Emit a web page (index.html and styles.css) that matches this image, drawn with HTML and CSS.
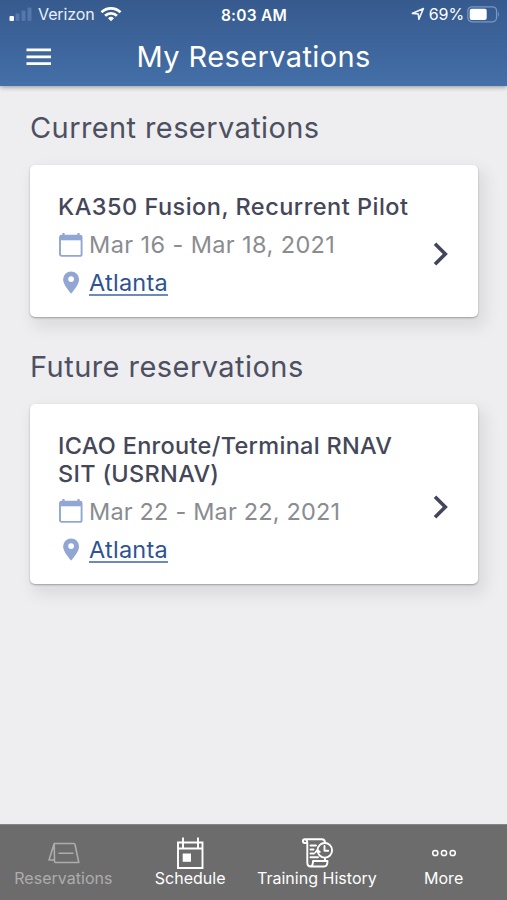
FILE: index.html
```html
<!DOCTYPE html>
<html lang="en">
<head>
<meta charset="utf-8">
<title>My Reservations</title>
<link rel="stylesheet" href="styles.css">
</head>
<body>
<div class="app">
  <header class="header">
    <div class="status">
      <div class="status-left">
        <svg width="24" height="16" viewBox="0 0 24 16"><rect x="0.5" y="10" width="4.5" height="5" rx="1" fill="#fff"/><g fill="#5577a9"><rect x="6.5" y="7.5" width="4" height="7.5" rx="1"/><rect x="12.5" y="4.5" width="4" height="10.5" rx="1"/><rect x="18.5" y="1.5" width="4" height="13.5" rx="1"/></g></svg>
        <span class="carrier">Verizon</span>
        <svg class="wifi" width="22" height="16" viewBox="0 0 22 16" fill="none" stroke="#fff" stroke-width="2.7"><path d="M1.500 6.200a13.500 13.500 0 0 1 19 0"/><path d="M5.100 9.800a8.400 8.400 0 0 1 11.800 0"/><path d="M8 12.300a4.300 4.300 0 0 1 6 0L11 15.300z" fill="#fff" stroke="none"/></svg>
      </div>
      <span class="clock">8:03 AM</span>
      <div class="status-right">
        <svg width="14" height="14" viewBox="0 0 14 14" fill="none" stroke="#f2f6fb" stroke-width="1.6" stroke-linejoin="round"><path d="M1.300 6.400 12.400 1.500 7.900 12.300 7.300 7z"/></svg>
        <span class="percent">69%</span>
        <svg class="battery" width="33" height="17" viewBox="0 0 33 17"><rect x="0.8" y="0.8" width="28.8" height="15" rx="4.2" fill="none" stroke="#7897c1" stroke-width="1.3"/><rect x="2.7" y="2.7" width="17" height="11.2" rx="2" fill="#fff"/><path d="M31 5.700q2 2.600 0 5.200z" fill="#7897c1"/></svg>
      </div>
    </div>
    <div class="bar">
      <svg width="26" height="18" viewBox="0 0 26 18" fill="#fff"><path d="M0.500 0.500h24.500v2.800H0.500zM0.500 7.400h24.500v2.800H0.500zM0.500 14.300h24.500v2.800H0.500z"/></svg>
      <h1 class="title">My Reservations</h1>
    </div>
  </header>

  <main class="content">
    <h2 class="section section-current">Current reservations</h2>
    <article class="card">
      <div class="details">
        <h3 class="course">KA350 Fusion, Recurrent Pilot</h3>
        <div class="row">
          <svg class="icon" width="26" height="26" viewBox="0 0 26 26"><path d="M5.500 1v4M20.500 1v4" stroke="#92a6d4" stroke-width="2.2"/><rect x="2" y="3.7" width="21.6" height="20.2" rx="1.7" fill="none" stroke="#92a6d4" stroke-width="1.9"/><path d="M2 3h21.600v5.300H2z" fill="#92a6d4"/></svg>
          <span class="date">Mar 16 - Mar 18, 2021</span>
        </div>
        <div class="row">
          <svg class="icon" width="26" height="26" viewBox="0 0 26 26"><path fill="#92a6d4" fill-rule="evenodd" d="M13.100 2.500a8 8 0 0 0-8 8C5.100 16 13.100 24.600 13.100 24.600S21.100 16 21.100 10.500a8 8 0 0 0-8-8zM13.100 7.200a2.900 2.900 0 1 1 0 5.800 2.900 2.900 0 0 1 0-5.800z"/></svg>
          <a class="place">Atlanta</a>
        </div>
      </div>
      <svg class="chevron" width="16" height="24" viewBox="0 0 16 24" fill="none" stroke="#43455e" stroke-width="3.6"><path d="M2 1.700 12.300 12 2 22.300"/></svg>
    </article>

    <h2 class="section section-future">Future reservations</h2>
    <article class="card card-future">
      <div class="details">
        <h3 class="course course-long">ICAO Enroute/Terminal RNAV<br>SIT (USRNAV)</h3>
        <div class="row">
          <svg class="icon" width="26" height="26" viewBox="0 0 26 26"><path d="M5.500 1v4M20.500 1v4" stroke="#92a6d4" stroke-width="2.2"/><rect x="2" y="3.7" width="21.6" height="20.2" rx="1.7" fill="none" stroke="#92a6d4" stroke-width="1.9"/><path d="M2 3h21.600v5.300H2z" fill="#92a6d4"/></svg>
          <span class="date date-future">Mar 22 - Mar 22, 2021</span>
        </div>
        <div class="row">
          <svg class="icon" width="26" height="26" viewBox="0 0 26 26"><path fill="#92a6d4" fill-rule="evenodd" d="M13.100 2.500a8 8 0 0 0-8 8C5.100 16 13.100 24.600 13.100 24.600S21.100 16 21.100 10.500a8 8 0 0 0-8-8zM13.100 7.200a2.900 2.900 0 1 1 0 5.800 2.900 2.900 0 0 1 0-5.800z"/></svg>
          <a class="place">Atlanta</a>
        </div>
      </div>
      <svg class="chevron" width="16" height="24" viewBox="0 0 16 24" fill="none" stroke="#43455e" stroke-width="3.6"><path d="M2 1.700 12.300 12 2 22.300"/></svg>
    </article>
  </main>

  <nav class="tabs">
    <div class="tab tab-active">
      <svg width="34" height="34" viewBox="0 0 34 34" fill="none" stroke="currentColor" stroke-width="1.6" stroke-linejoin="round"><path d="M8.200 7.500h19.500q1 0 1.300 1L32.800 26.500H9.900q-1.700 0-1.400-1.900L8.200 7.500 3 24h5.500M12.500 17.300h15"/></svg>
      <span>Reservations</span>
    </div>
    <div class="tab">
      <svg width="34" height="34" viewBox="0 0 34 34" fill="none" stroke="currentColor" stroke-width="1.9"><path d="M5 6.500h24.500V32H5zM5 12.500h24.500M10 1.500v11M25 1.500v11"/><path d="M9.700 17.500H18v8.300H9.700z" fill="currentColor" stroke="none"/></svg>
      <span>Schedule</span>
    </div>
    <div class="tab">
      <svg width="34" height="34" viewBox="0 0 34 34" fill="none" stroke="currentColor" stroke-width="1.9" stroke-linejoin="round" stroke-linecap="round"><path d="M7 7H4.800a1.900 1.900 0 0 1 0-3.800H22q3 0 3 3.600M4.800 3.200Q7.300 3.200 7.300 7v19.500q0 4 3.500 4H24q3.500 0 3.500-5.500H13q0 5.500-3 5.500M25 22.500v2.500M10.500 9.500H16M10.500 13.500h3M10.500 17.500h3.500M10.500 21.300H18"/><circle cx="24.8" cy="14.3" r="7.3"/><path d="M24.500 10v4.700h3.700M15.300 16.500l2-2.500 2.500 2"/></svg>
      <span>Training History</span>
    </div>
    <div class="tab">
      <svg width="34" height="34" viewBox="0 0 34 34" fill="none" stroke="currentColor" stroke-width="1.5"><circle cx="8.3" cy="17" r="2.6"/><circle cx="17" cy="17" r="2.6"/><circle cx="25.7" cy="17" r="2.6"/></svg>
      <span>More</span>
    </div>
  </nav>
</div>
</body>
</html>
```
FILE: styles.css
```css
* { box-sizing: border-box; }
body { margin: 0; font-family: Inter, "Liberation Sans", sans-serif; background: #eeeef0; }
svg { display: block; flex: none; }
h1, h2, h3 { margin: 0; font-weight: 400; white-space: nowrap; }
.app { height: 900px; display: flex; flex-direction: column; overflow: hidden; }

.header { height: 86px; flex: none; color: #fff; background: linear-gradient(#365a8e, #446fa8); box-shadow: 0 1px 5px rgba(0, 0, 0, .4); }
.status { height: 30px; padding: 0 8px 0 9px; display: grid; grid-template-columns: 1fr auto 1fr; align-items: center; font-size: 16px; line-height: 28px; white-space: nowrap; }
.status-left, .status-right { height: 30px; padding-bottom: 2px; display: flex; align-items: center; }
.status-right { justify-content: flex-end; }
.carrier { margin-left: 5px; letter-spacing: -.1px; color: #e9f0f8; }
.wifi { margin-left: 5px; }
.clock { padding-top: 1px; font-weight: 600; font-size: 15.5px; letter-spacing: .25px; }
.percent { margin-left: 4px; letter-spacing: -.1px; }
.battery { margin-left: 3px; margin-right: -1px; }
.bar { height: 54px; padding-left: 26px; display: flex; align-items: center; }
.title { margin: -1px 0 0 84.5px; font-size: 29px; letter-spacing: .4px; }

.content { flex: 1; padding: 0 29.5px 0 30px; }
.section { color: #4d5061; font-size: 29px; line-height: 36px; letter-spacing: .4px; }
.section-current { margin: 24px 0 19.3px; }
.section-future { margin: 32.2px 0 19px; letter-spacing: .45px; }
.card { display: flex; align-items: center; justify-content: space-between; padding: 27.5px 28.5px 16px 28px; background: #fff; border-radius: 5px; box-shadow: 0 1px 2px rgba(0, 0, 0, .3), 5px 8px 16px 3px rgba(0, 0, 0, .08); }
.card-future { padding-top: 28px; }
.course { margin-bottom: 4.5px; color: #454759; font-size: 23.5px; font-weight: 500; line-height: 28.5px; letter-spacing: .48px; }
.course-long { margin-bottom: 3.7px; letter-spacing: .3px; }
.row { height: 37.5px; display: flex; align-items: center; }
.icon { margin-right: 5px; }
.date { color: #8a8c90; font-size: 23.5px; letter-spacing: .4px; white-space: nowrap; }
.date-future { letter-spacing: .18px; }
.place { margin-top: 3.5px; color: #2e5393; font-size: 23.5px; line-height: 22px; letter-spacing: .25px; border-bottom: 2px solid #6c8abb; }
.chevron { margin-top: 14px; }

.tabs { height: 76px; flex: none; display: grid; grid-template-columns: repeat(4, 1fr); color: #fff; background: #6c6c6c; border-top: 1px solid #858585; }
.tab { display: flex; flex-direction: column; align-items: center; padding-top: 11px; font-size: 16px; line-height: 16px; letter-spacing: .02px; white-space: nowrap; }
.tab-active { color: #acacac; }
```
